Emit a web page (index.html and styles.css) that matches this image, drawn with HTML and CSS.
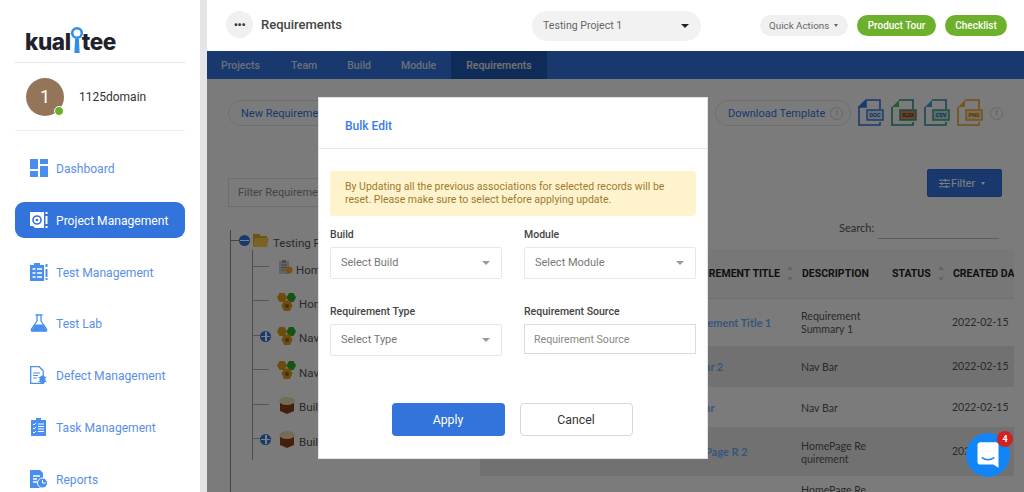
FILE: index.html
```html
<!DOCTYPE html>
<html lang="en">
<head>
<meta charset="utf-8">
<title>Requirements</title>
<link rel="stylesheet" href="styles.css">
</head>
<body>
<div class="app">
  <aside class="sidebar">
    <div class="logo">
      <span class="logo-text">kual</span>
      <svg class="logo-key" viewBox="0 0 14 28" width="14" height="28"><circle cx="7" cy="7" r="4.800" fill="none" stroke="#2f8fe8" stroke-width="2.600"/><path d="M5 13h4l.6 14H4.400z" fill="#2f8fe8"/></svg>
      <span class="logo-text">tee</span>
    </div>
    <div class="user">
      <div class="avatar">1<span class="status"></span></div>
      <span class="user-name">1125domain</span>
    </div>
    <nav class="nav">
      <a class="nav-item">
        <svg class="nav-icon" viewBox="0 0 18 18"><path d="M0 0h8v10H0zM10 0h8v5h-8zM10 7h8v11h-8zM0 12h8v6H0z" fill="#4a8ff0"/></svg>
        <span>Dashboard</span>
      </a>
      <a class="nav-item active">
        <svg class="nav-icon" viewBox="0 0 18 18"><path d="M0 1h14v16H5l-2-2H0z" fill="#fff"/><circle cx="7" cy="9" r="4" fill="none" stroke="#3273dc" stroke-width="1.600"/><circle cx="7" cy="9" r="1.300" fill="#3273dc"/><path d="M15.500 1h2v2h-2zM15.500 5h2v8h-2zM15.500 15h2v2h-2z" fill="#fff"/></svg>
        <span>Project Management</span>
      </a>
      <a class="nav-item">
        <svg class="nav-icon" viewBox="0 0 18 18"><path d="M0 2h4V0h6v2h4v16H0z" fill="#4a8ff0"/><path d="M2.500 6h3M7 6h5M2.500 10h3M7 10h5M2.500 14h3M7 14h5" stroke="#fff" stroke-width="1.400"/><path d="M15.500 1h2v3h-2zM15.500 6h2v8h-2zM15.500 15h2v2h-2z" fill="#4a8ff0"/></svg>
        <span>Test Management</span>
      </a>
      <a class="nav-item">
        <svg class="nav-icon" viewBox="0 0 18 18"><path d="M5.500 1h7M7 1v6L1.500 15c-.6 1.200 0 2.200 1.300 2.200h12.400c1.300 0 1.900-1 1.300-2.200L11 7V1" fill="none" stroke="#4a8ff0" stroke-width="1.300"/><path d="M4.500 10.500h9l3.500 6.700H1z" fill="#4a8ff0"/></svg>
        <span>Test Lab</span>
      </a>
      <a class="nav-item">
        <svg class="nav-icon" viewBox="0 0 18 18"><path d="M.7.700h8.500l4 4v12.600H.7z" fill="none" stroke="#4a8ff0" stroke-width="1.300"/><path d="M3 7h7M3 9.500h5M3 12h4" stroke="#4a8ff0" stroke-width="1"/><ellipse cx="12.500" cy="13.500" rx="3" ry="4" fill="#4a8ff0"/><path d="M8.500 11l2 1M16.500 11l-2 1M8.500 16l2-1M16.500 16l-2-1" stroke="#4a8ff0"/></svg>
        <span>Defect Management</span>
      </a>
      <a class="nav-item">
        <svg class="nav-icon" viewBox="0 0 18 18"><path d="M1 2h5V0h5v2h5v16H1z" fill="#4a8ff0"/><path d="M3 6l1 1 2-2M3 10l1 1 2-2M3 14l1 1 2-2" fill="none" stroke="#fff"/><path d="M8 6h6M8 8.500h6M8 11h6M8 13.500h6" stroke="#fff"/></svg>
        <span>Task Management</span>
      </a>
      <a class="nav-item">
        <svg class="nav-icon" viewBox="0 0 18 18"><path d="M0 0h10l3 3v15H0z" fill="#4a8ff0"/><path d="M3 6h7M3 9h4M3 12h4" stroke="#fff" stroke-width="1.300"/><circle cx="12.500" cy="13" r="5" fill="#4a8ff0" stroke="#fff"/><path d="M12.500 10v3h3" fill="none" stroke="#fff"/></svg>
        <span>Reports</span>
      </a>
    </nav>
  </aside>
  <div class="gutter"></div>
  <div class="main">
    <header class="topbar">
      <button class="dots">&bull;&bull;&bull;</button>
      <h1 class="page-title">Requirements</h1>
      <div class="project-select"><span>Testing Project 1</span><i class="caret-dark"></i></div>
      <div class="quick">Quick Actions<i class="caret-small"></i></div>
      <button class="pill-green tour">Product Tour</button>
      <button class="pill-green check">Checklist</button>
    </header>
    <div class="under">
      <div class="subnav">
        <a>Projects</a><a>Team</a><a>Build</a><a>Module</a><a class="current">Requirements</a>
      </div>
      <div class="content">
        <div class="toolbar">
          <button class="outline-btn new">New Requirement</button>
          <button class="outline-btn download">Download Template<i class="info">i</i></button>
          <div class="files">
            <svg class="file" viewBox="0 0 26 28"><path d="M8 1L1 8h7z" fill="#3273dc"/><path d="M8 1h14v9M1 8v18h21v-3M8 1L1 8h7V1" fill="none" stroke="#3273dc" stroke-width="1.600"/><rect x="9" y="11" width="16" height="10" fill="#cfe0f8" stroke="#3273dc" stroke-width="1.400"/><text x="17" y="18.400" class="ftext ft-doc">DOC</text></svg>
            <svg class="file" viewBox="0 0 26 28"><path d="M8 1L1 8h7z" fill="#3fbf5f"/><path d="M8 1h14v9M1 8v18h21v-3" fill="none" stroke="#2f8f80" stroke-width="1.600"/><rect x="9" y="11" width="16" height="10" fill="#c98a60" stroke="#2f8f80" stroke-width="1.400"/><text x="17" y="18.400" class="ftext ft-xls">XLSX</text></svg>
            <svg class="file" viewBox="0 0 26 28"><path d="M8 1L1 8h7z" fill="#3f9fe0"/><path d="M8 1h14v9M1 8v18h21v-3" fill="none" stroke="#2f8fa0" stroke-width="1.600"/><rect x="9" y="11" width="16" height="10" fill="#b0d8e8" stroke="#2fa060" stroke-width="1.400"/><text x="17" y="18.400" class="ftext ft-csv">CSV</text></svg>
            <svg class="file" viewBox="0 0 26 28"><path d="M8 1L1 8h7z" fill="#f0a830"/><path d="M8 1h14v9M1 8v18h21v-3" fill="none" stroke="#e8a030" stroke-width="1.600"/><rect x="9" y="11" width="16" height="10" fill="#f8dca8" stroke="#e8a030" stroke-width="1.400"/><text x="17" y="18.400" class="ftext ft-pdf">PNG</text></svg>
            <i class="info">i</i>
          </div>
        </div>
        <div class="work">
          <div class="tree-col">
            <div class="filter-input">Filter Requirements</div>
            <div class="tree">
              <div class="root"><span class="minus"></span>
                <svg class="folder" viewBox="0 0 16 13"><path d="M0 0h6l2 2h6v11H0z" fill="#d8a92c"/><path d="M2 4h14l-2 9H0z" fill="#f0c94a"/></svg>
                <span class="tree-label">Testing Project 1</span>
              </div>
              <ul class="branch">
                <li><svg class="node clip" viewBox="0 0 15 15"><path d="M1 1h10v13H1z" fill="#c9c9c9"/><path d="M4 0h4v3H4z" fill="#999"/><path d="M3 5h6M3 7.500h5M3 10h4" stroke="#888"/><circle cx="11" cy="10" r="3.500" fill="#f0a030"/></svg><span class="tree-label">HomePage</span></li>
                <li><svg class="node" viewBox="0 0 18 18"><path d="M1.500 0h5L9 4.500 6.500 9h-5L-1 4.500z" fill="#d99a1c"/><path d="M11 0h4.500L18 4.500 15.500 9H11L8.500 4.500z" fill="#2fa52f"/><path d="M6 7.500h6l2.500 5L12 18H6l-2.500-5.500z" fill="#d99a1c"/><circle cx="9" cy="13" r="2" fill="#8a5a10"/></svg><span class="tree-label">HomePage R</span></li>
                <li><span class="plus"></span><svg class="node" viewBox="0 0 18 18"><path d="M1.500 0h5L9 4.500 6.500 9h-5L-1 4.500z" fill="#d99a1c"/><path d="M11 0h4.500L18 4.500 15.500 9H11L8.500 4.500z" fill="#2fa52f"/><path d="M6 7.500h6l2.500 5L12 18H6l-2.500-5.500z" fill="#d99a1c"/><circle cx="9" cy="13" r="2" fill="#8a5a10"/></svg><span class="tree-label">Nav Bar</span></li>
                <li><svg class="node" viewBox="0 0 18 18"><path d="M1.500 0h5L9 4.500 6.500 9h-5L-1 4.500z" fill="#d99a1c"/><path d="M11 0h4.500L18 4.500 15.500 9H11L8.500 4.500z" fill="#2fa52f"/><path d="M6 7.500h6l2.500 5L12 18H6l-2.500-5.500z" fill="#d99a1c"/><circle cx="9" cy="13" r="2" fill="#8a5a10"/></svg><span class="tree-label">Nav Bar 2</span></li>
                <li><svg class="node" viewBox="0 0 18 18"><path d="M2 6h14v9l-7 3-7-3z" fill="#8a3f1c"/><ellipse cx="9" cy="5" rx="8" ry="4" fill="#e8d9a8"/></svg><span class="tree-label">Build 1</span></li>
                <li><span class="plus"></span><svg class="node" viewBox="0 0 18 18"><path d="M2 6h14v9l-7 3-7-3z" fill="#8a3f1c"/><ellipse cx="9" cy="5" rx="8" ry="4" fill="#e8d9a8"/></svg><span class="tree-label">Build 2</span></li>
              </ul>
            </div>
          </div>
          <div class="table-col">
            <button class="filter-btn"><svg viewBox="0 0 12 12" width="11" height="11"><path d="M0 2.500h12M0 6h12M0 9.500h12" stroke="#fff" stroke-width="1.200"/><path d="M7 1v3M3 4.500v3M8 8v3" stroke="#fff" stroke-width="1.400"/></svg>Filter<i class="caret-small white"></i></button>
            <div class="search"><label>Search:</label><span class="search-input"></span></div>
            <table class="grid">
              <colgroup><col class="c1"><col class="c2"><col class="c3"><col class="c4"><col class="c5"></colgroup>
              <thead>
                <tr><th></th><th class="th-title">Requirement Title<i class="sort"></i></th><th>Description</th><th>Status<i class="sort"></i></th><th>Created Date</th></tr>
              </thead>
              <tbody>
                <tr class="r1"><td></td><td class="link">Requirement Title 1</td><td class="desc">Requirement<br>Summary 1</td><td></td><td class="date">2022-02-15</td></tr>
                <tr class="r2 odd"><td></td><td class="link">Nav Bar 2</td><td class="desc">Nav Bar</td><td></td><td class="date">2022-02-15</td></tr>
                <tr class="r3"><td></td><td class="link">Nav Bar</td><td class="desc">Nav Bar</td><td></td><td class="date">2022-02-15</td></tr>
                <tr class="r4 odd"><td></td><td class="link">HomePage R 2</td><td class="desc">HomePage Re<br>quirement</td><td></td><td class="date">2022-02-15</td></tr>
                <tr class="r5"><td></td><td class="link"></td><td class="desc">HomePage Re</td><td></td><td></td></tr>
              </tbody>
            </table>
          </div>
        </div>
      </div>
      <div class="backdrop"></div>
      <div class="modal">
        <div class="modal-head">Bulk Edit</div>
        <div class="modal-body">
          <div class="alert">By Updating all the previous associations for selected records will be reset. Please make sure to select before applying update.</div>
          <div class="form-grid">
            <div class="field"><label>Build</label><div class="select"><span>Select Build</span><i class="caret-gray"></i></div></div>
            <div class="field"><label>Module</label><div class="select"><span>Select Module</span><i class="caret-gray"></i></div></div>
            <div class="field"><label>Requirement Type</label><div class="select"><span>Select Type</span><i class="caret-gray"></i></div></div>
            <div class="field"><label>Requirement Source</label><input class="text-input" placeholder="Requirement Source"></div>
          </div>
          <div class="actions">
            <button class="apply">Apply</button>
            <button class="cancel">Cancel</button>
          </div>
        </div>
      </div>
    </div>
  </div>
</div>
<div class="chat">
  <svg viewBox="0 0 24 24" width="28" height="28"><path d="M3 3.500Q3 1 5.500 1h13Q21 1 21 3.500V23l-4.500-2.800H5.500Q3 20.200 3 17.700z" fill="#fff"/><path d="M7 14.500Q12 17.500 17 14.500" fill="none" stroke="#1185f5" stroke-width="1.300" stroke-linecap="round"/></svg>
  <span class="badge">4</span>
</div>
</body>
</html>
```
FILE: styles.css
```css
* { box-sizing: border-box; }
html, body { margin: 0; height: 100%; overflow: hidden; }
body { font-family: Roboto, "Liberation Sans", sans-serif; background: #fff; color: #333; }
button { font-family: inherit; cursor: pointer; }
i { font-style: normal; }

.app { display: flex; height: 492px; width: 1024px; overflow: hidden; }

/* sidebar */
.sidebar { width: 200px; flex: none; padding: 0 15px; background: #fff; }
.logo { height: 63px; padding: 25px 0 0 10px; display: flex; align-items: flex-start; border-bottom: 1px solid #e6e6e6; }
.logo-text { font-family: Inter, Roboto, sans-serif; font-weight: 800; font-size: 22.500px; line-height: 28px; color: #20232b; letter-spacing: -.4px; margin-top: 3px; }
.logo-key { flex: none; margin: 1px -2px 0 -1px; }
.user { height: 68px; padding-left: 11px; display: flex; align-items: center; gap: 15px; border-bottom: 1px solid #eee; }
.avatar { position: relative; width: 38px; height: 38px; border-radius: 50%; background: #957559; color: #fff; font-size: 18px; display: flex; align-items: center; justify-content: center; }
.status { position: absolute; right: 0; bottom: 0; width: 10px; height: 10px; border-radius: 50%; background: #6ab02d; border: 1.500px solid #fff; }
.user-name { font-size: 12px; color: #333; margin-top: 1px; }
.nav { display: flex; flex-direction: column; gap: 15.750px; padding-top: 19px; }
.nav-item { display: flex; align-items: center; height: 36px; padding-left: 15px; gap: 8px; border-radius: 9px; color: #5a8fe8; font-size: 12.100px; }
.nav-item span { margin-top: 2px; }
.nav-item.active { background: #3273dc; color: #fff; }
.nav-icon { width: 18px; height: 18px; flex: none; }

.gutter { width: 7px; flex: none; background: #e3e5e6; }

/* main */
.main { flex: 1; min-width: 0; display: flex; flex-direction: column; }
.topbar { height: 51px; flex: none; display: flex; align-items: center; padding-left: 19px; background: #fff; }
.dots { width: 27px; height: 27px; border-radius: 50%; border: 0; background: #f0f0f0; font-size: 13px; line-height: 27px; letter-spacing: -.5px; padding: 0; color: #333; margin-bottom: 2px; }
.page-title { margin: 0 0 2px 8px; font-size: 13px; font-weight: 500; color: #444; width: 271px; }
.project-select { width: 169px; height: 30px; border-radius: 15px; background: #f2f2f2; display: flex; align-items: center; justify-content: space-between; padding: 0 12px 0 11px; font-size: 10.600px; color: #666; }
.caret-dark { width: 0; height: 0; border: 4px solid transparent; border-top: 4.500px solid #222; border-bottom: 0; }
.quick { margin-left: 59px; width: 88px; height: 21px; border-radius: 11px; background: #f0f0f0; color: #666; font-size: 9.800px; display: flex; align-items: center; padding-left: 9px; }
.caret-small { display: inline-block; width: 0; height: 0; border: 2.500px solid transparent; border-top: 3px solid #666; border-bottom: 0; margin-left: 5px; }
.caret-small.white { border-top-color: #fff; }
.pill-green { height: 21px; border: 0; border-radius: 11px; background: #6db02b; color: #fff; font-size: 10px; font-weight: 500; padding: 0; }
.tour { width: 79px; margin-left: 9px; }
.check { width: 62px; margin-left: 9px; }

.under { position: relative; flex: 1; min-height: 0; overflow: hidden; display: flex; flex-direction: column; }
.subnav { height: 28px; flex: none; display: flex; background: #3273dc; font-size: 10.500px; font-weight: 500; }
.subnav a { display: flex; align-items: center; padding: 0 15px; color: #d4dff2; }
.subnav a:first-child { padding: 0 16px 0 14px; }
.subnav a.current { background: #1f57b0; color: #e8e8e8; }
.content { flex: 1; min-height: 0; background: #f7f7f7; padding: 0 21px; }

.toolbar { height: 97px; display: flex; align-items: flex-start; padding-top: 21px; }
.outline-btn { height: 26px; border-radius: 13px; border: 1px solid #ddd; background: transparent; color: #3273dc; font-size: 11px; padding: 0 12px; text-align: left; white-space: nowrap; overflow: hidden; }
.new { width: 130px; }
.download { margin-left: 357px; width: 136px; display: flex; align-items: center; gap: 5px; }
.info { display: inline-flex; width: 13px; height: 13px; border-radius: 50%; border: 1px solid #ccc; color: #999; font-size: 7px; align-items: center; justify-content: center; flex: none; }
.files { display: flex; align-items: center; margin: -1px 0 0 7px; gap: 7px; }
.file { width: 26px; height: 28px; }
.ftext { font-family: Roboto, sans-serif; font-size: 5.500px; font-weight: 700; text-anchor: middle; }
.ft-doc { fill: #1f57b0; }
.ft-xls { fill: #5a3010; font-size: 4.800px; }
.ft-csv { fill: #155a80; }
.ft-pdf { fill: #a06a10; }

.work { display: flex; }
.tree-col { width: 252px; flex: none; }
.filter-input { width: 130px; height: 29px; margin-top: 2px; border: 1px solid #ddd; padding: 0 9px; font-size: 11px; line-height: 27px; color: #888; white-space: nowrap; overflow: hidden; }
.tree { margin: 23px 0 0 2px; height: 300px; border-left: 1px solid #888; font-size: 11px; }
.root { display: flex; align-items: center; height: 20px; position: relative; padding-left: 8px; }
.root::before { content: ""; position: absolute; left: 0; top: 10px; width: 8px; border-top: 1px solid #888; }
.minus, .plus { width: 11px; height: 11px; border-radius: 50%; background: #3273dc; flex: none; position: relative; }
.minus::after { content: ""; position: absolute; left: 1px; right: 1px; top: 5px; height: 1.500px; background: #fff; }
.plus { position: absolute; left: 7px; top: 12px; }
.plus::before { content: ""; position: absolute; left: 5px; top: 1px; bottom: 1px; width: 1.500px; background: #fff; }
.plus::after { content: ""; position: absolute; left: 1px; right: 1px; top: 5px; height: 1.500px; background: #fff; }
.folder { width: 16px; height: 13px; margin: 0 4px 0 3px; flex: none; }
.tree-label { color: #555; white-space: nowrap; font-size: 11.500px; margin-top: 5px; }
.branch { list-style: none; margin: 7px 0 0 21px; padding: 0 0 4px; border-left: 1px solid #999; }
.branch li { position: relative; height: 34.400px; display: flex; align-items: center; padding-left: 25px; gap: 3px; }
.branch li:first-child { margin-top: -7px; }
.branch li::before { content: ""; position: absolute; left: 0; top: 16px; width: 16px; border-top: 1px solid #aaa; }
.node { width: 18px; height: 18px; flex: none; overflow: visible; }
.node.clip { width: 15px; height: 15px; }

.table-col { flex: 1; min-width: 0; display: flex; flex-direction: column; align-items: flex-end; }
.filter-btn { width: 75px; height: 28px; margin: -7px 1px 0 0; border: 1px solid #2a66c8; border-radius: 2px; background: #3273dc; color: #fff; font-size: 10.800px; display: flex; align-items: center; gap: 1px; padding: 0 0 0 11px; }
.search { display: flex; align-items: flex-end; height: 35px; margin: 7px 4px 0 0; font-family: Lato, sans-serif; font-size: 11px; color: #555; gap: 4px; width: 160px; }
.search label { line-height: 16px; margin-bottom: 3px; }
.search-input { width: 123px; border-bottom: 1px solid #bbb; height: 20px; }

.grid { width: 534px; margin: 10px -11px 0 0; border-collapse: collapse; table-layout: fixed; font-family: Lato, sans-serif; font-size: 11px; color: #555; flex: none; }
.c1 { width: 196px; } .c2 { width: 125px; } .c3 { width: 90px; } .c4 { width: 61px; } .c5 { width: 62px; }
.grid th { height: 49px; background: #eee; font-family: Roboto, sans-serif; font-size: 10.500px; font-weight: 700; color: #222; text-transform: uppercase; text-align: left; white-space: nowrap; overflow: hidden; border-bottom: 1px solid #ddd; }
.grid .th-title { padding-left: 3px; }
.grid td { padding: 0 4px 0 0; line-height: 13px; white-space: nowrap; overflow: hidden; }
.grid .desc { font-size: 10.600px; padding-top: 2px; }
.grid .date { font-size: 10.500px; }
.grid .link { color: #70acf8; font-weight: 700; font-size: 10.900px; }
.grid .odd td { background: #e2e2e2; }
.r1 { height: 48px; } .r2 { height: 41px; } .r3 { height: 40px; } .r4 { height: 49px; } .r5 { height: 40px; }
.grid .r5 td { vertical-align: top; padding-top: 8px; }
.sort { display: inline-block; width: 7px; height: 10px; margin-left: 7px; vertical-align: middle; position: relative; opacity: .5; }
.sort::before, .sort::after { content: ""; position: absolute; left: 0; border: 3.500px solid transparent; }
.sort::before { top: -3px; border-bottom: 4px solid #aaa; border-top: 0; }
.sort::after { bottom: -2px; border-top: 4px solid #aaa; border-bottom: 0; }

/* modal */
.backdrop { position: absolute; inset: 0; background: rgba(0, 0, 0, .5); }
.modal { position: absolute; left: 111px; top: 46px; width: 390px; height: 362px; background: #fff; border: 1px solid #dfe3ea; }
.modal-head { height: 51px; padding: 21px 0 0 26px; font-size: 12px; font-weight: 500; color: #3a7bec; border-bottom: 1px solid #e8e8e8; }
.modal-body { padding: 22px 11px 0 11px; }
.alert { height: 45px; background: #fff3cd; border-radius: 3px; padding: 9px 15px 0; font-size: 10.500px; line-height: 13px; color: #a07a30; }
.form-grid { display: grid; grid-template-columns: 172px 172px; column-gap: 22px; row-gap: 26px; margin-top: 12px; }
.field label { display: block; font-size: 10.500px; font-weight: 500; line-height: 14px; color: #444; margin-bottom: 5px; }
.select { height: 32px; border: 1px solid #e6e8ec; border-radius: 2px; display: flex; align-items: center; justify-content: space-between; padding: 0 11px 1px 10px; font-size: 11px; color: #777; }
.caret-gray { width: 0; height: 0; border: 4px solid transparent; border-top: 4px solid #999; border-bottom: 0; }
.text-input { width: 172px; height: 30px; border: 1px solid #d8dbe2; padding: 0 9px; font-family: inherit; font-size: 10.600px; outline: 0; }
.text-input::placeholder { color: #888; opacity: 1; }
.actions { display: flex; justify-content: center; gap: 15px; margin-top: 47px; padding-right: 2px; }
.apply, .cancel { width: 113px; height: 33px; border-radius: 4px; font-size: 12.300px; padding: 0; }
.apply { background: #3273dc; border: 0; color: #fff; }
.cancel { background: #fff; border: 1px solid #d8d8d8; color: #333; }

/* chat launcher */
.chat { position: absolute; left: 966px; top: 433px; width: 44px; height: 44px; border-radius: 50%; background: #1185f5; display: flex; align-items: center; justify-content: center; }
.badge { position: absolute; right: -3px; top: -2px; width: 16px; height: 16px; border-radius: 50%; background: #d32020; color: #fff; font-size: 9px; font-weight: 700; display: flex; align-items: center; justify-content: center; }
```
